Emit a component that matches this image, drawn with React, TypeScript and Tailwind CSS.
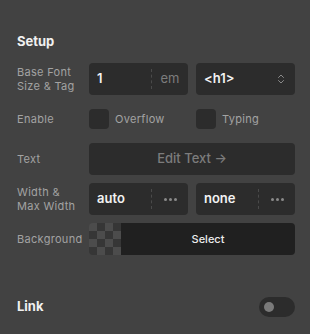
import { ChevronsUpDown } from 'lucide-react';

function Label({ children }: { children: React.ReactNode }) {
  return (
    <div className="w-[72px] shrink-0 text-[11px] leading-[14px] tracking-[0.3px] text-[#a3a3a3]">
      {children}
    </div>
  );
}

function Dots() {
  return (
    <div className="flex items-center gap-[2px]">
      <span className="h-[3px] w-[3px] rounded-full bg-[#8a8a8a]" />
      <span className="h-[3px] w-[3px] rounded-full bg-[#8a8a8a]" />
      <span className="h-[3px] w-[3px] rounded-full bg-[#8a8a8a]" />
    </div>
  );
}

function SplitInput({ value, unit }: { value: string; unit: React.ReactNode }) {
  return (
    <div className="flex h-8 items-center rounded-[4px] bg-[#2c2c2c]">
      <span className="min-w-0 flex-1 pl-[8px] text-[13px] font-semibold text-[#f2f2f2]">{value}</span>
      <span className="h-[20px] border-l border-dashed border-[#4a4a4a]" />
      <span className="flex w-[36px] shrink-0 items-center justify-center text-[13px] text-[#7c7c7c]">{unit}</span>
    </div>
  );
}

function Checkbox({ label }: { label: string }) {
  return (
    <div className="flex items-center gap-[6px]">
      <span className="h-5 w-5 rounded-[4px] bg-[#2c2c2c]" />
      <span className="text-[11px] tracking-[0.3px] text-[#a3a3a3]">{label}</span>
    </div>
  );
}

export default function App() {
  const cells = Array.from({ length: 16 }, (_, i) => {
    const r = Math.floor(i / 4);
    const c = i % 4;
    return (r + c) % 2 === 0;
  });

  return (
    <div
      className="h-[334px] w-[310px] bg-[#424242] pl-[17px] pr-[15px] pt-[33px]"
      style={{ fontFamily: 'Inter, "Noto Sans", sans-serif' }}
    >
      <div className="text-[13px] font-bold leading-4 text-[#f0f0f0]">Setup</div>
      <div className="mt-[14px] flex flex-col gap-2">
        <div className="flex h-8 items-center">
          <Label>
            Base Font
            <br />
            Size &amp; Tag
          </Label>
          <div className="grid flex-1 grid-cols-2 gap-2">
            <SplitInput value="1" unit="em" />
            <div className="flex h-8 items-center justify-between rounded-[4px] bg-[#2c2c2c] px-[8px]">
              <span className="text-[13px] font-semibold text-[#f2f2f2]">&lt;h1&gt;</span>
              <ChevronsUpDown size={12} strokeWidth={2} className="text-[#8a8a8a]" />
            </div>
          </div>
        </div>
        <div className="flex h-8 items-center">
          <Label>Enable</Label>
          <div className="grid flex-1 grid-cols-2 gap-2">
            <Checkbox label="Overflow" />
            <Checkbox label="Typing" />
          </div>
        </div>
        <div className="flex h-8 items-center">
          <Label>Text</Label>
          <div className="flex h-8 flex-1 items-center justify-center rounded-[4px] bg-[#2c2c2c] text-[13px] font-medium text-[#7c7c7c]">
            Edit Text →
          </div>
        </div>
        <div className="flex h-8 items-center">
          <Label>
            Width &amp;
            <br />
            Max Width
          </Label>
          <div className="grid flex-1 grid-cols-2 gap-2">
            <SplitInput value="auto" unit={<Dots />} />
            <SplitInput value="none" unit={<Dots />} />
          </div>
        </div>
        <div className="flex h-8 items-center">
          <Label>Background</Label>
          <div className="flex h-8 flex-1 overflow-hidden rounded-[4px]">
            <div className="grid h-8 w-8 grid-cols-4 grid-rows-4">
              {cells.map((light, i) => (
                <span key={i} className={light ? 'bg-[#4c4c4c]' : 'bg-[#363636]'} />
              ))}
            </div>
            <div className="flex flex-1 items-center justify-center bg-[#202020] text-[11px] font-medium text-[#ececec]">
              Select
            </div>
          </div>
        </div>
      </div>
      <div className="mt-[42px] flex h-5 items-center justify-between">
        <span className="text-[13px] font-bold text-[#f0f0f0]">Link</span>
        <div className="flex h-5 w-9 items-center rounded-full bg-[#2c2c2c] pl-[5px]">
          <span className="h-[10px] w-[10px] rounded-full bg-[#7a7a7a]" />
        </div>
      </div>
    </div>
  );
}
